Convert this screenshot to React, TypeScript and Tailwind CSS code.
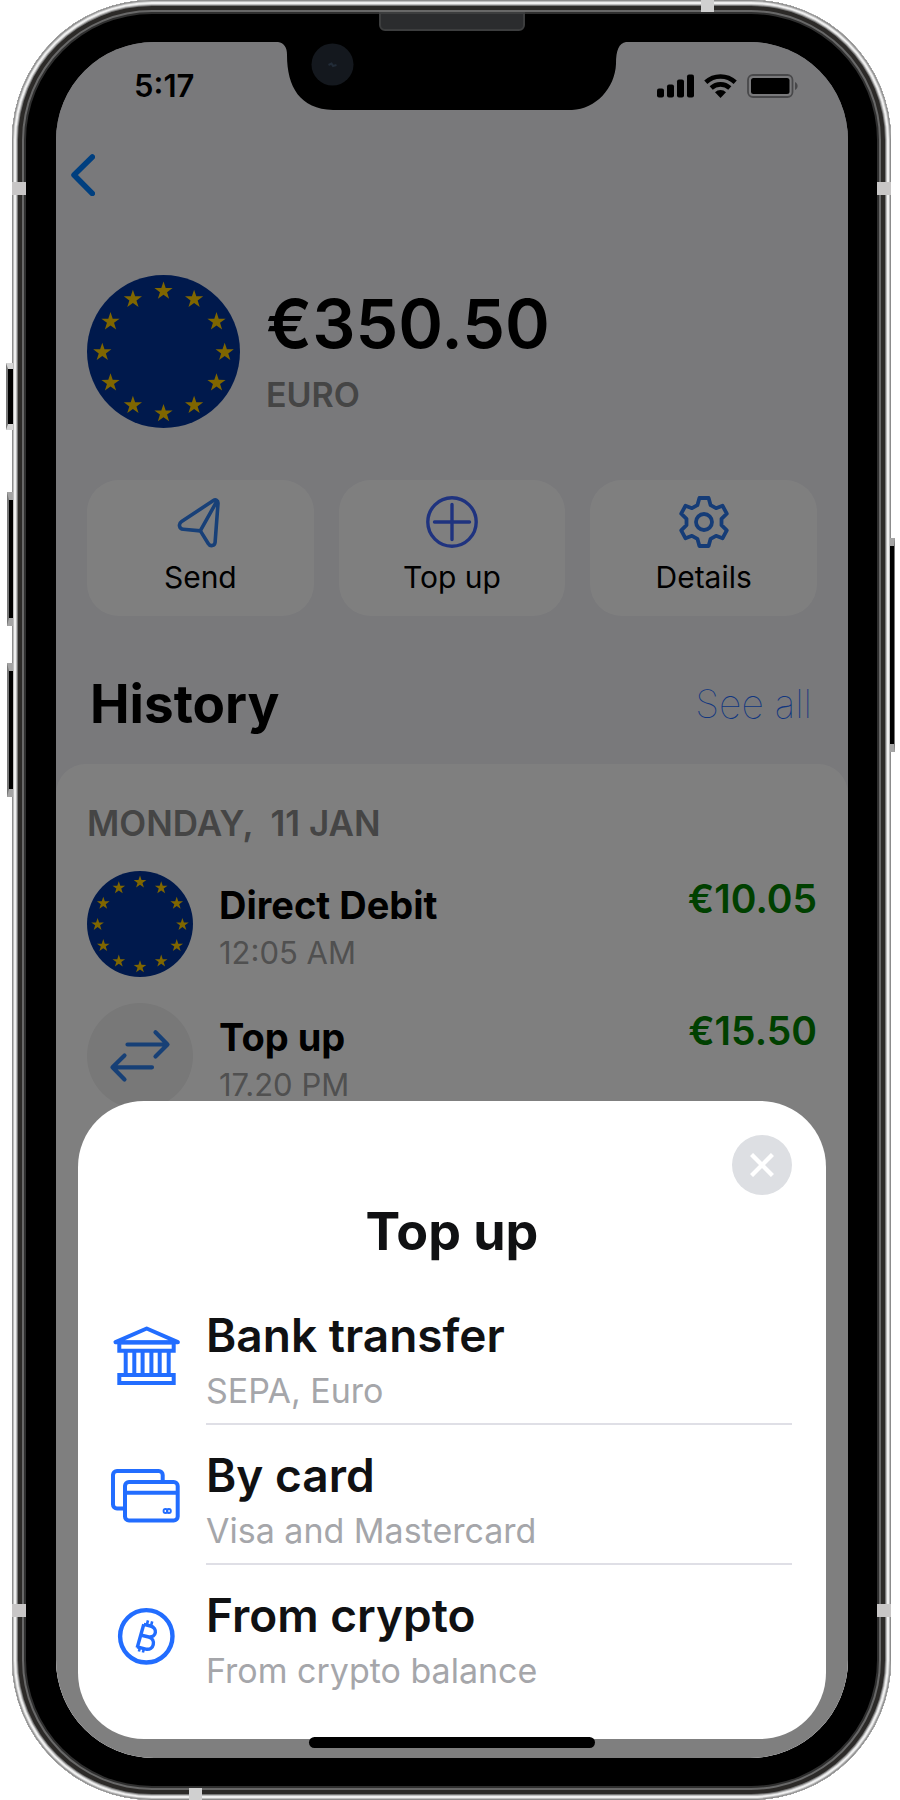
import React from "react";

const STAR_ANGLES = Array.from({ length: 12 }, (_, i) => (i * Math.PI) / 6);

function starPoints(cx: number, cy: number, r: number): string {
  return Array.from({ length: 10 }, (_, i) => {
    const a = -Math.PI / 2 + (i * Math.PI) / 5;
    const d = i % 2 === 0 ? r : r * 0.39;
    return `${(cx + d * Math.cos(a)).toFixed(2)},${(cy + d * Math.sin(a)).toFixed(2)}`;
  }).join(" ");
}

function EuroFlag({ className }: { className: string }) {
  return (
    <svg viewBox="0 0 200 200" className={className} aria-hidden="true">
      <circle cx="100" cy="100" r="100" fill="#003399" />
      {STAR_ANGLES.map((a) => (
        <polygon
          key={a}
          points={starPoints(100 + 80 * Math.sin(a), 101 - 80 * Math.cos(a), 12.5)}
          fill="#ffcc00"
        />
      ))}
    </svg>
  );
}

function SendIcon() {
  return (
    <svg viewBox="0 0 52 52" className="size-[52px]" fill="none" stroke="#3080f0" strokeWidth="3.6" strokeLinecap="round" strokeLinejoin="round" aria-hidden="true">
      <path d="M39.4 4.6 7.6 25.4c-3.600 2.400-2.400 7.600 1.600 7.900L26.400 34.900l7.800 12.600c2 3.400 6.600 2.400 6.900-1.200L44 7.500c.200-3.200-2.400-4.400-4.600-2.900Z" />
      <path d="M42.700 5.500 26.400 34.700" />
    </svg>
  );
}

function PlusIcon() {
  return (
    <svg viewBox="0 0 52 52" className="size-[52px]" fill="none" stroke="#3f67ff" strokeWidth="3.4" strokeLinecap="round" aria-hidden="true">
      <circle cx="26" cy="26" r="24.200" />
      <path d="M26 8.500v35M8.500 26h35" />
    </svg>
  );
}

function GearIcon() {
  return (
    <svg viewBox="-26 -26 52 52" className="size-[52px]" fill="none" stroke="#2b78ee" strokeWidth="3.8" strokeLinejoin="round" aria-hidden="true">
      <path d="M-4.600-24h9.200L6.600-16.800 12-13.800 18.500-16.300 22.800-8.300 17.500-3.200V3.200L22.800 8.300 18.500 16.300 12 13.800 6.600 16.800 4.600 24h-9.200L-6.600 16.800-12 13.800-18.500 16.300-22.800 8.300-17.500 3.200V-3.200L-22.800-8.300-18.500-16.300-12-13.800-6.600-16.800Z" />
      <circle r="8" />
    </svg>
  );
}

function TransferIcon() {
  return (
    <svg viewBox="0 0 106 106" className="size-[106px]" aria-hidden="true">
      <circle cx="53" cy="53" r="53" fill="#f0f0f0" />
      <g fill="none" stroke="#2f80ed" strokeWidth="4.200" strokeLinecap="round" strokeLinejoin="round">
        <path d="M40.500 41.500H80M68.500 29.200 80.500 41.500 68.500 53.500" />
        <path d="M65 64.300H25.500M37.500 52.500 25.500 64.300 37.500 76.500" />
      </g>
    </svg>
  );
}

function BankIcon() {
  return (
    <svg viewBox="0 0 68 68" className="size-[68px] shrink-0" fill="none" stroke="#226dff" strokeWidth="4" strokeLinejoin="round" aria-hidden="true">
      <path d="M34.700 7.500 3.500 21.200h62.400Z" />
      <path d="M7.300 21.500h54.400v8.300H7.300ZM7.300 54h54.400v8H7.300Z" strokeLinejoin="miter" />
      <path d="M13.700 30v24M22.300 30v24M30.600 30v24M39.400 30v24M47.700 30v24M56.700 30v24" />
    </svg>
  );
}

function CardsIcon() {
  return (
    <svg viewBox="0 0 68 68" className="size-[68px] shrink-0 overflow-visible" fill="none" stroke="#226dff" strokeWidth="4" aria-hidden="true">
      <path d="M50.700 21v-7a4 4 0 0 0-4-4H5a4 4 0 0 0-4 4v29.500a4 4 0 0 0 4 4h8" />
      <rect x="13" y="21" width="52.700" height="38.500" rx="4" />
      <path d="M13 31.700h52.700" />
      <g strokeWidth="1.800">
        <circle cx="53.500" cy="50" r="2" />
        <circle cx="56.900" cy="50" r="2" />
      </g>
    </svg>
  );
}

function BitcoinIcon() {
  return (
    <svg viewBox="0 0 68 68" className="size-[68px] shrink-0" fill="none" stroke="#226dff" aria-hidden="true">
      <circle cx="34.300" cy="35.300" r="26.200" strokeWidth="4.400" />
      <g strokeWidth="3.400" strokeLinejoin="round">
        <path d="M31.800 23.300 38.500 25C46 27.100 44.500 36.800 36.800 36L28.500 34M36.800 36C44.500 38.300 42 49.800 33.800 48.100L25.200 45.800" />
        <path d="M31.800 23.300 25.200 46.800" />
        <path strokeWidth="2.600" d="M36 19.300l-1.200 4.500M40.200 20.400l-1.200 4.500M28 46.500l-1.100 4M32 47.500l-1.100 4" />
      </g>
    </svg>
  );
}

function StatusIcons() {
  return (
    <div className="flex items-center gap-[10px]">
      <svg viewBox="0 0 37 24" className="h-6 w-[37px]" aria-hidden="true">
        <rect x="0" y="14.500" width="7" height="9" rx="2" />
        <rect x="10" y="10.500" width="7" height="13" rx="2" />
        <rect x="20" y="5.500" width="7" height="18" rx="2" />
        <rect x="30" y=".5" width="7" height="23" rx="2" />
      </svg>
      <svg viewBox="0 0 33 24" className="h-6 w-[33px]" fill="none" stroke="#000" strokeWidth="4.600" aria-hidden="true">
        <path d="M1.800 8.300a21.500 21.500 0 0 1 29.400 0" />
        <path d="M7.200 14a13.700 13.700 0 0 1 18.600 0" />
        <path d="M16.500 23.900 11 18.200a7.900 7.900 0 0 1 11 0Z" fill="#000" stroke="none" />
      </svg>
      <svg viewBox="0 0 52 24" className="h-6 w-[52px]" aria-hidden="true">
        <rect x="1" y="1" width="44.500" height="22" rx="5" fill="none" stroke="#000" strokeOpacity=".4" strokeWidth="1.800" />
        <rect x="4" y="4" width="38.500" height="16" rx="2.500" />
        <path d="M48 8v8c3.500-1.500 3.500-6.500 0-8Z" fillOpacity=".4" />
      </svg>
    </div>
  );
}

function Notch() {
  return (
    <svg viewBox="0 0 348 68" className="absolute left-1/2 top-0 z-20 h-[68px] w-[348px] -translate-x-1/2" aria-hidden="true">
      <path d="M0 0C6 1 9 5 9 13 9 45 22 67 55 68H294C318 67 337 46 338 22 338 8 341 1 348 0Z" />
      <circle cx="54.500" cy="22.500" r="21" fill="#14181e" />
      <path d="M50.500 23l3-1.500 1.500 2.500 3.500-1" stroke="#222c38" strokeWidth="2" fill="none" />
    </svg>
  );
}

const ACTIONS = [
  { label: "Send", icon: <SendIcon /> },
  { label: "Top up", icon: <PlusIcon /> },
  { label: "Details", icon: <GearIcon /> },
];

const TRANSACTIONS = [
  { title: "Direct Debit", time: "12:05 AM", amount: "€10.05", icon: <EuroFlag className="size-[106px]" /> },
  { title: "Top up", time: "17.20 PM", amount: "€15.50", icon: <TransferIcon /> },
];

const METHODS = [
  { title: "Bank transfer", note: "SEPA, Euro", icon: <BankIcon /> },
  { title: "By card", note: "Visa and Mastercard", icon: <CardsIcon /> },
  { title: "From crypto", note: "From crypto balance", icon: <BitcoinIcon /> },
];

function AccountScreen() {
  return (
    <>
      <div className="flex h-[88px] items-center justify-between pl-[78px] pr-[49px]">
        <time className="text-[31px] font-semibold leading-10">5:17</time>
        <StatusIcons />
      </div>
      <nav className="flex h-[90px] items-center px-[15px]">
        <button type="button" aria-label="Back">
          <svg viewBox="0 0 24 42" className="h-[42px] w-6" fill="none" stroke="#007fff" strokeWidth="5.500" strokeLinecap="round" strokeLinejoin="round" aria-hidden="true">
            <path d="M21.300 3 3 21 21.300 39.500" />
          </svg>
        </button>
      </nav>
      <section className="px-[31px] pt-[55px]">
        <div className="flex gap-[26px]">
          <EuroFlag className="size-[153px] shrink-0" />
          <div className="flex flex-col gap-3 pt-2">
            <h1 className="text-[68px] font-semibold leading-[80px]">€350.50</h1>
            <p className="text-[34px] font-semibold leading-10 text-[#8a8a8a]">EURO</p>
          </div>
        </div>
        <div className="mt-[52px] grid grid-cols-3 gap-[25px]">
          {ACTIONS.map((a) => (
            <button key={a.label} type="button" className="flex h-[136px] flex-col items-center gap-[9px] rounded-[32px] bg-white pt-4 text-[30px] leading-10">
              {a.icon}
              <span>{a.label}</span>
            </button>
          ))}
        </div>
      </section>
      <section className="flex grow flex-col">
        <div className="mt-14 flex items-center justify-between pl-[34px] pr-9">
          <h2 className="text-[53px] font-bold leading-[64px]">History</h2>
          <a href="#history" className="text-[39px] font-thin leading-[64px] text-[#226dff]">See all</a>
        </div>
        <div className="mt-7 grow rounded-t-[30px] bg-white px-[31px] pt-[39px]">
          <h3 className="whitespace-pre text-[35px] font-semibold leading-10 text-[#8a8a8a]">MONDAY,  11 JAN</h3>
          <ul className="mt-7 flex flex-col gap-[26px]">
            {TRANSACTIONS.map((t) => (
              <li key={t.title} className="flex">
                {t.icon}
                <div className="ml-[26px] grow pt-2.5">
                  <p className="text-[38px] font-bold leading-[48px]">{t.title}</p>
                  <p className="text-[31px] leading-[48px] text-[#a0a0a0]">{t.time}</p>
                </div>
                <p className="pt-1 text-[39px] font-semibold leading-[48px] text-[#008000]">{t.amount}</p>
              </li>
            ))}
          </ul>
        </div>
      </section>
    </>
  );
}

function TopUpSheet() {
  return (
    <div role="dialog" aria-labelledby="sheet-title" className="absolute inset-x-[22px] bottom-[19px] rounded-[66px] bg-white py-[34px] text-[#101113]">
      <div className="flex justify-end px-[34px]">
        <button type="button" aria-label="Close" className="flex size-[60px] items-center justify-center rounded-full bg-[#dddfe3]">
          <svg viewBox="0 0 24 24" className="size-6" stroke="#fff" strokeWidth="4.400" aria-hidden="true">
            <path d="M1.500 1.500 22.500 22.500M22.500 1.500 1.500 22.500" />
          </svg>
        </button>
      </div>
      <h2 id="sheet-title" className="mb-[21px] mt-[5px] text-center text-[52px] font-bold leading-[64px]">Top up</h2>
      <ul className="px-[34px]">
        {METHODS.map((m) => (
          <li key={m.title} className="group">
            <button type="button" className="flex w-full items-center gap-[26px] text-left">
              {m.icon}
              <span className="flex h-[140px] grow flex-col gap-2 border-b-2 border-[#dfdfe6] pt-[22px] group-last:border-transparent">
                <span className="text-[46px] font-semibold leading-[56px]">{m.title}</span>
                <span className="text-[34px] leading-10 text-[#a5a6aa]">{m.note}</span>
              </span>
            </button>
          </li>
        ))}
      </ul>
    </div>
  );
}

export default function App() {
  return (
    <div className="flex min-h-screen bg-white pl-3 pr-[9px] font-['Inter',sans-serif] text-black">
      <div className="relative flex grow flex-col rounded-[140px] bg-black py-[42px] pl-11 pr-[43px] shadow-[inset_0_0_0_1px_#8c8c8c,inset_0_0_0_2px_#bdbdbd,inset_0_0_0_4px_#efefef,inset_0_0_0_5px_#bdbdbd,inset_0_0_0_6px_#777,inset_0_0_0_10px_#2c2a28,inset_0_0_0_12px_#686868,inset_0_0_0_14px_#2f2f2f]">
        <i className="absolute -left-1.5 top-[363px] h-[67px] w-[7px] border-y-[6px] border-l-2 border-y-[#d5d5d5] border-l-[#777] bg-black" />
        <i className="absolute -left-[5px] top-[492px] h-[134px] w-1.5 border-y-[8px] border-l-2 border-y-[#a5a5a5] border-l-[#777] bg-black" />
        <i className="absolute -left-[5px] top-[663px] h-[134px] w-1.5 border-y-[8px] border-l-2 border-y-[#a5a5a5] border-l-[#777] bg-black" />
        <i className="absolute -right-1 top-[538px] h-[214px] w-[5px] border-y-[8px] border-r border-y-[#a5a5a5] border-r-[#777] bg-black" />
        <i className="absolute left-0 top-[182px] h-[13px] w-[14px] bg-[#c8c6c6]" />
        <i className="absolute right-0 top-[182px] h-[13px] w-[14px] bg-[#c8c6c6]" />
        <i className="absolute bottom-[183px] left-0 h-[13px] w-[14px] bg-[#c8c6c6]" />
        <i className="absolute bottom-[183px] right-0 h-[13px] w-[14px] bg-[#c8c6c6]" />
        <i className="absolute right-[177px] top-0 h-3 w-[13px] bg-[#d0d0d0]" />
        <i className="absolute bottom-0 left-[177px] h-3 w-[13px] bg-[#d0d0d0]" />
        <i className="absolute left-1/2 top-3 h-[19px] w-[146px] -translate-x-1/2 rounded-b-md border-2 border-[#3c3d3e] bg-[#2b2c2e]" />
        <main className="relative flex grow flex-col overflow-hidden rounded-[98px] bg-[#f2f2f7]">
          <AccountScreen />
          <div className="absolute inset-0 bg-black/50" />
          <Notch />
          <TopUpSheet />
          <i className="absolute bottom-[10px] left-1/2 h-[11px] w-[286px] -translate-x-1/2 rounded-full bg-black" />
        </main>
      </div>
    </div>
  );
}
